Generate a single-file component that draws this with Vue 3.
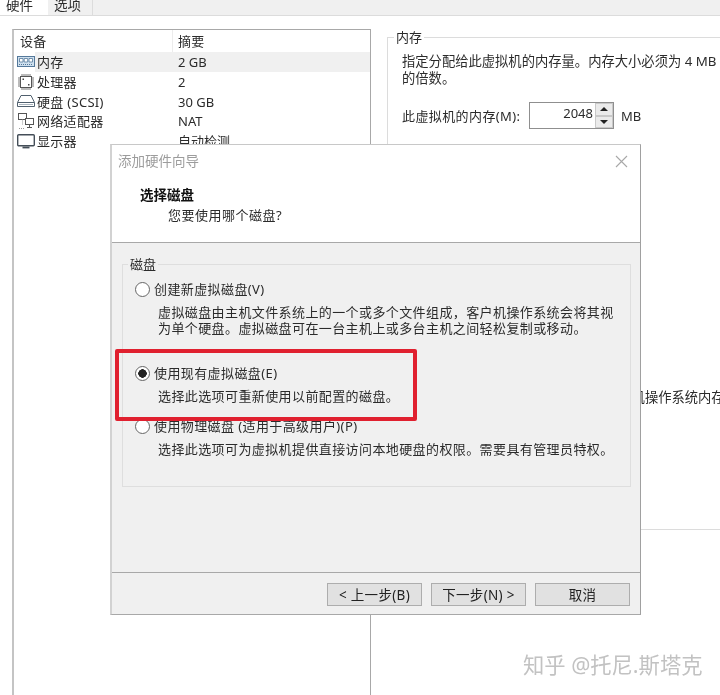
<template>
  <div class="page">
    <div class="tabs">
      <div class="tab active">硬件</div>
      <div class="tab">选项</div>
    </div>

    <div class="content">
      <div class="device-list">
        <div class="list-head">
          <div class="col-name">设备</div>
          <div class="col-sum">摘要</div>
        </div>
        <div v-for="d in devices" :key="d.name" class="row">
          <svg class="dev-icon" width="18" height="18" viewBox="0 0 18 18" fill="none">
            <template v-if="d.icon === 'ram'">
              <rect x="0.5" y="3.5" width="17" height="10" fill="#cfe0ee" stroke="#54789a" />
              <path d="M2.500 5.500h3.500v3.500H2.500zM7.200 5.500h3.500v3.500H7.200zM12 5.500h3.500v3.500H12z" fill="#fff" stroke="#54789a" stroke-width="0.8" />
              <path d="M2 11.500h14" stroke="#54789a" stroke-dasharray="1 1" />
            </template>
            <template v-else-if="d.icon === 'cpu'">
              <rect x="3.500" y="3.500" width="11" height="11" fill="#fff" stroke="#555" />
              <path d="M5 1v2M7 1v2M9 1v2M11 1v2M13 1v2M5 15v2M7 15v2M9 15v2M11 15v2M13 15v2M1 5h2M1 7h2M1 9h2M1 11h2M1 13h2M15 5h2M15 7h2M15 9h2M15 11h2M15 13h2" stroke="#777" />
              <path d="M5.500 5.500h1.500v1.500H5.500zM11 11h1.500v1.500H11z" fill="#444" />
            </template>
            <template v-else-if="d.icon === 'disk'">
              <path d="M4 3.500h10l3.500 7v4h-17v-4z" fill="#fff" stroke="#50606e" />
              <path d="M0.500 10.500h17" stroke="#50606e" />
              <path d="M2 12.500h14" stroke="#a9b4bd" />
            </template>
            <template v-else-if="d.icon === 'net'">
              <rect x="1.500" y="1.500" width="8" height="6" fill="#fff" stroke="#555" />
              <rect x="8.500" y="6.500" width="8" height="6" fill="#fff" stroke="#555" />
              <path d="M12.500 12.500v3M10 15.500h5" stroke="#555" />
              <path d="M5.500 7.500v6M2 16.500h6" stroke="#999" stroke-dasharray="1 1" />
            </template>
            <template v-else>
              <rect x="0.700" y="2.700" width="16.600" height="11" rx="1" fill="#fff" stroke="#444e58" stroke-width="1.400" />
              <path d="M5.500 15.500h7" stroke="#444e58" stroke-width="1.800" />
            </template>
          </svg>
          <div class="row-name" :class="{ selected: d.selected }">{{ d.name }}</div>
          <div class="row-sum" :class="{ selected: d.selected }">{{ d.summary }}</div>
        </div>
      </div>

      <fieldset class="memory">
        <legend>内存</legend>
        <p class="memory-desc">指定分配给此虚拟机的内存量。内存大小必须为 4 MB<br />的倍数。</p>
        <div class="memory-row">
          <label>此虚拟机的内存(M):</label>
          <div class="spin">
            <span class="spin-value">2048</span>
            <div class="spin-btns">
              <div class="spin-btn"><i class="arrow up"></i></div>
              <div class="spin-btn"><i class="arrow down"></i></div>
            </div>
          </div>
          <span class="unit">MB</span>
        </div>
        <p class="memory-note">客户机操作系统内存</p>
      </fieldset>
    </div>

    <div class="dialog">
      <div class="dialog-head">
        <div class="dialog-title">添加硬件向导</div>
        <svg class="close" width="13" height="13" viewBox="0 0 13 13">
          <path d="M1 1l11 11M12 1L1 12" stroke="#a8a8a8" stroke-width="1.100" fill="none" />
        </svg>
        <div class="heading">选择磁盘</div>
        <div class="subheading">您要使用哪个磁盘?</div>
      </div>

      <div class="dialog-body">
        <fieldset class="disk-group">
          <legend>磁盘</legend>
          <div v-for="o in options" :key="o.label" class="option" :class="o.cls">
            <div class="option-label">
              <span class="radio" :class="{ on: o.checked }"></span>
              <span>{{ o.label }}</span>
            </div>
            <p class="option-desc" v-html="o.desc"></p>
          </div>
        </fieldset>
      </div>

      <div class="dialog-foot">
        <button class="btn">&lt; 上一步(B)</button>
        <button class="btn">下一步(N) &gt;</button>
        <button class="btn">取消</button>
      </div>
    </div>

    <div class="highlight"></div>
    <div class="watermark">知乎 @托尼.斯塔克</div>
  </div>
</template>

<script setup>
const devices = [
  { name: '内存', summary: '2 GB', icon: 'ram', selected: true },
  { name: '处理器', summary: '2', icon: 'cpu' },
  { name: '硬盘 (SCSI)', summary: '30 GB', icon: 'disk' },
  { name: '网络适配器', summary: 'NAT', icon: 'net' },
  { name: '显示器', summary: '自动检测', icon: 'monitor' }
]

const options = [
  {
    label: '创建新虚拟磁盘(V)',
    desc: '虚拟磁盘由主机文件系统上的一个或多个文件组成，客户机操作系统会将其视<br>为单个硬盘。虚拟磁盘可在一台主机上或多台主机之间轻松复制或移动。',
    cls: 'opt-new'
  },
  {
    label: '使用现有虚拟磁盘(E)',
    desc: '选择此选项可重新使用以前配置的磁盘。',
    checked: true,
    cls: 'opt-existing'
  },
  {
    label: '使用物理磁盘 (适用于高级用户)(P)',
    desc: '选择此选项可为虚拟机提供直接访问本地硬盘的权限。需要具有管理员特权。',
    cls: 'opt-physical'
  }
]
</script>

<style>
html,
body {
  margin: 0;
  background: #fff;
}
</style>

<style scoped>
.page {
  position: relative;
  width: 720px;
  height: 695px;
  overflow: hidden;
  background: #fff;
  color: #2b2b2b;
  font-family: "Noto Sans", "Noto Sans CJK SC", sans-serif;
  font-size: 13px;
  filter: blur(0.4px);
}

.tabs {
  display: flex;
  height: 16px;
  box-sizing: border-box;
  background: #f0f0f0;
  border-bottom: 1px solid #dcdcdc;
}

.tab {
  width: 45px;
  box-sizing: border-box;
  padding-left: 6px;
  font-size: 13.500px;
  line-height: 10px;
  border-right: 1px solid #dcdcdc;
}

.tab.active {
  width: 48px;
  background: #fff;
  border-right: 0;
}

.content {
  display: flex;
  padding: 13px 0 0 12px;
  gap: 16px;
}

.device-list {
  flex: none;
  width: 359px;
  height: 680px;
  box-sizing: border-box;
  border: 1px solid #a8a8a8;
  border-left: 2px solid #c4c4c4;
}

.list-head {
  display: flex;
  height: 22px;
  line-height: 22px;
  letter-spacing: 0.3px;
}

.col-name {
  width: 152px;
  padding-left: 6px;
  border-right: 1px solid #ececec;
}

.col-sum {
  padding-left: 5px;
}

.row {
  display: flex;
  align-items: center;
  height: 19.800px;
  padding-left: 3px;
}

.dev-icon {
  flex: none;
}

.row-name {
  width: 141px;
  height: 20px;
  line-height: 20px;
  padding-left: 2px;
  letter-spacing: 0.3px;
  white-space: nowrap;
}

.row-sum {
  flex: 1;
  height: 20px;
  line-height: 20px;
}

.selected {
  background: #f0f0f0;
}

.memory {
  flex: none;
  width: 360px;
  height: 501px;
  box-sizing: border-box;
  margin: 0;
  padding: 0 0 0 14px;
  border: 1px solid #dcdcdc;
}

.memory legend {
  padding: 0 2px;
  margin-left: -8px;
  line-height: 16px;
  font-size: 13px;
}

.memory-desc {
  margin: 8px 0 0;
  line-height: 17px;
  font-size: 13.300px;
  white-space: nowrap;
}

.memory-row {
  display: flex;
  align-items: center;
  margin-top: 15px;
  height: 27px;
}

.memory-row label {
  width: 127px;
  font-size: 13px;
  letter-spacing: 0.4px;
  white-space: nowrap;
}

.spin {
  display: flex;
  width: 85px;
  height: 27px;
  box-sizing: border-box;
  border: 1px solid #8f8f8f;
  background: #fff;
}

.spin-value {
  flex: 1;
  text-align: right;
  padding-right: 2px;
  line-height: 21px;
}

.spin-btns {
  display: flex;
  flex-direction: column;
  width: 18px;
  background: #e4e4e4;
}

.spin-btn {
  flex: 1;
  display: flex;
  align-items: center;
  justify-content: center;
  border: 1px solid #c9c9c9;
  background: #ebebeb;
}

.arrow {
  width: 0;
  height: 0;
  border-left: 4px solid transparent;
  border-right: 4px solid transparent;
}

.arrow.up {
  border-bottom: 4px solid #222;
}

.arrow.down {
  border-top: 4px solid #222;
}

.unit {
  margin-left: 7px;
}

.memory-note {
  margin: 260px 0 0 203px;
  line-height: 17px;
  font-size: 13.300px;
  white-space: nowrap;
}

.dialog {
  position: absolute;
  left: 110px;
  top: 144px;
  width: 531px;
  height: 471px;
  box-sizing: border-box;
  display: flex;
  flex-direction: column;
  background: #f0f0f0;
  border-top: 1px solid #c8c8c8;
  border-left: 2px solid #d2d2d2;
  border-right: 1px solid #a0a0a0;
  border-bottom: 1px solid #a8a8a8;
}

.dialog-head {
  position: relative;
  flex: none;
  height: 98px;
  box-sizing: border-box;
  background: #fff;
  border-bottom: 1px solid #a8a8a8;
}

.dialog-title {
  padding-left: 6px;
  line-height: 32px;
  font-size: 13.500px;
  color: #9c9c9c;
}

.close {
  position: absolute;
  right: 12px;
  top: 10px;
}

.heading {
  margin-top: 9px;
  padding-left: 28px;
  line-height: 18px;
  font-weight: 700;
  font-size: 13.500px;
  color: #111;
}

.subheading {
  margin-top: 2px;
  padding-left: 56px;
  line-height: 18px;
  letter-spacing: 0.5px;
}

.dialog-body {
  flex: 1;
  padding: 13px 9px 0 10px;
}

.disk-group {
  height: 231px;
  box-sizing: border-box;
  margin: 0;
  padding: 0 0 0 12px;
  border: 1px solid #dedede;
}

.disk-group legend {
  padding: 0 2px;
  margin-left: -7px;
  line-height: 16px;
}

.option-label {
  display: flex;
  align-items: center;
  gap: 4px;
  line-height: 18px;
  letter-spacing: 0.4px;
  white-space: nowrap;
}

.radio {
  flex: none;
  width: 15px;
  height: 15px;
  box-sizing: border-box;
  border: 1px solid #666;
  border-radius: 50%;
  background: #fff;
}

.radio.on {
  background: radial-gradient(circle, #222 0 4px, #fff 4.500px);
}

.option-desc {
  margin: 6px 0 0 23px;
  line-height: 16px;
  letter-spacing: 0.4px;
  white-space: nowrap;
}

.opt-new {
  margin-top: 8px;
}

.opt-existing {
  margin-top: 28px;
}

.opt-existing .option-desc {
  margin-top: 6px;
}

.opt-physical {
  margin-top: 13px;
}

.dialog-foot {
  flex: none;
  height: 42px;
  box-sizing: border-box;
  display: flex;
  justify-content: flex-end;
  gap: 9px;
  padding: 10px 10px 0 0;
  border-top: 1px solid #a8a8a8;
}

.btn {
  width: 95px;
  height: 23px;
  padding: 0 0 3px;
  font: inherit;
  font-size: 13.500px;
  letter-spacing: 0.3px;
  color: #222;
  background: #e1e1e1;
  border: 1px solid #adadad;
}

.highlight {
  position: absolute;
  left: 115px;
  top: 349px;
  width: 302px;
  height: 72px;
  box-sizing: border-box;
  border: 4px solid #e0202f;
  border-radius: 2px;
}

.watermark {
  position: absolute;
  left: 523px;
  top: 650px;
  line-height: 30px;
  font-size: 21.300px;
  color: #c2c2c2;
  white-space: nowrap;
}
</style>
